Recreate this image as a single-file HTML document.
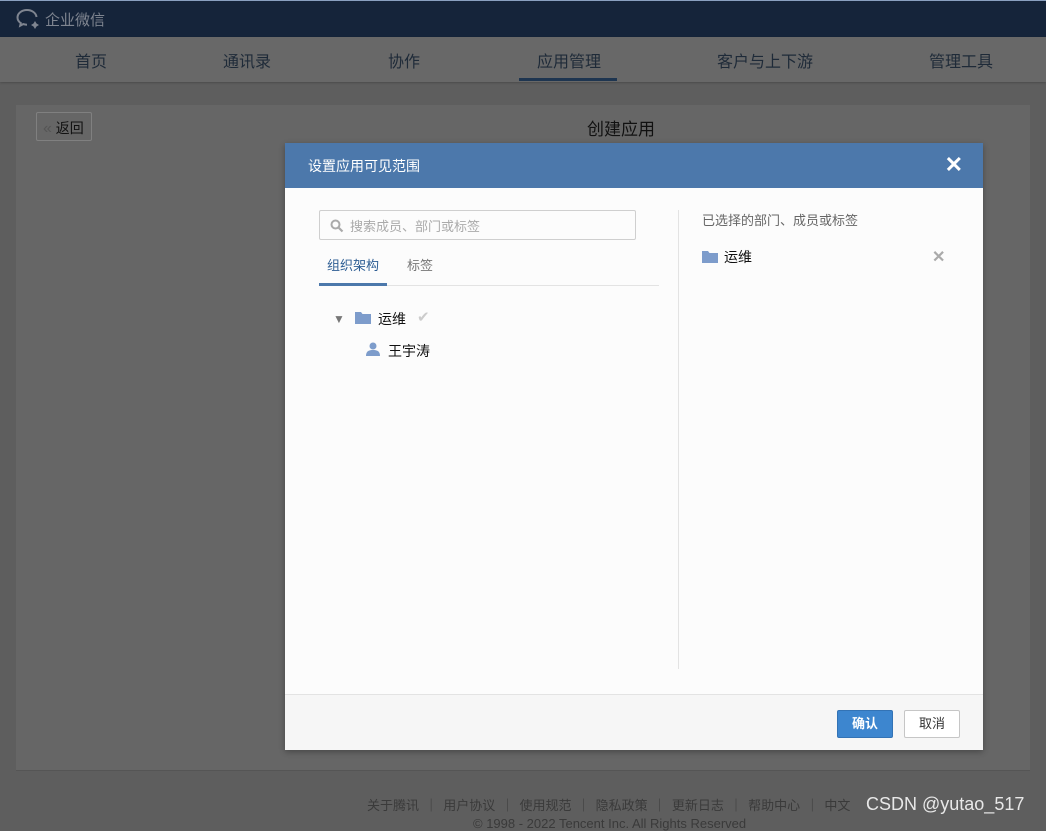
<!DOCTYPE html>
<html><head><meta charset="utf-8"><style>
*{margin:0;padding:0;box-sizing:border-box}
body{width:1046px;height:827px;overflow:hidden;background:#5e5e5e;font-family:"Liberation Sans","Noto Sans CJK SC",sans-serif;position:relative}
.top{position:absolute;left:0;top:0;width:1046px;height:37px;background:#15243a;border-top:1px solid #8aa0c0}
.logo{position:absolute;left:16px;top:7px;color:#7f8590;font-size:15px;display:flex;align-items:center;gap:3px}
.nav{position:absolute;top:37px;left:0;width:1046px;height:45px;background:#686868;box-shadow:0 1px 2px rgba(0,0,0,.2)}
.nav span{position:absolute;top:11px;font-size:16px;color:#1e2a38}
.card{position:absolute;left:16px;top:105px;width:1014px;height:666px;background:#666;border-bottom:1px solid #555}
.back{position:absolute;left:36px;top:112px;width:56px;height:29px;border:1px solid #808080;border-radius:2px;font-size:14px;color:#111;padding:5px 0 0 6px}
.title{position:absolute;left:587px;top:115px;font-size:17px;color:#111}
.foot{position:absolute;top:795px;left:367px;font-size:13px;color:#3a3a3a;white-space:nowrap;word-spacing:2px}
.copy{position:absolute;top:816px;left:473px;font-size:13px;color:#3a3a3a}
.csdn{position:absolute;left:866px;top:794px;font-size:18px;color:#e8e8e8}
.dlg{position:absolute;left:285px;top:143px;width:698px;height:607px;background:#fcfcfc;box-shadow:0 2px 6px rgba(0,0,0,.3)}
.dh{height:45px;background:#4c78ab;color:#fff;font-size:14px;padding:13px 0 0 23px;position:relative}
.dh .x{position:absolute;right:20px;top:9px;font-size:22px;font-weight:bold}
.search{position:absolute;left:34px;top:67px;width:317px;height:30px;border:1px solid #cfcfcf;border-radius:2px;font-size:13px;color:#aaa;padding:5px 0 0 30px}
.tabs{position:absolute;left:34px;top:142px;width:340px;border-bottom:1px solid #e3e3e3;height:1px}
.t1{position:absolute;left:42px;top:112px;font-size:13px;color:#2d5d93}
.t1b{position:absolute;left:34px;top:140px;width:68px;height:3px;background:#4c78ab}
.t2{position:absolute;left:122px;top:112px;font-size:13px;color:#777}
.vline{position:absolute;left:393px;top:67px;width:1px;height:459px;background:#e3e3e3}
.ff{position:absolute;top:551px;left:0;width:698px;height:56px;background:#f6f6f6;border-top:1px solid #e3e3e3}
.ok{position:absolute;left:552px;top:567px;width:56px;height:28px;background:#3d86cf;border:1px solid #3373b5;color:#fff;font-size:13px;font-weight:bold;text-align:center;line-height:26px;border-radius:2px}
.cn{position:absolute;left:619px;top:567px;width:56px;height:28px;background:#fff;border:1px solid #c6c6c6;color:#333;font-size:13px;text-align:center;line-height:26px;border-radius:2px}
.t{position:absolute;font-size:14px;color:#111}
</style></head><body>
<div class="top"><div class="logo"><svg width="26" height="22" viewBox="0 0 26 22"><path d="M11 2C5.5 2 1.5 5.5 1.5 9.5c0 2.3 1.3 4.3 3.3 5.6l-.6 2.6 3-1.6c1.2.4 2.4.6 3.8.6" fill="none" stroke="#7f8590" stroke-width="2"/><path d="M11 2c5 0 9 3 9.5 7" fill="none" stroke="#7f8590" stroke-width="2"/><path d="M19 13l1.5 2.5 2.5 1.5-2.5 1.5-1.5 2.5-1.5-2.5-2.5-1.5 2.5-1.5z" fill="#7f8590"/></svg>企业微信</div></div>
<div class="nav"><span style="left:75px">首页</span><span style="left:223px">通讯录</span><span style="left:388px">协作</span><span style="left:537px">应用管理</span><div style="position:absolute;left:519px;top:41px;width:98px;height:3px;background:#1e3550"></div><span style="left:717px">客户与上下游</span><span style="left:929px">管理工具</span></div>
<div class="card"></div>
<div class="back"><span style="color:#555;font-size:16px">«</span> 返回</div>
<div class="title">创建应用</div>
<div class="foot">关于腾讯 ｜ 用户协议 ｜ 使用规范 ｜ 隐私政策 ｜ 更新日志 ｜ 帮助中心 ｜ 中文</div>
<div class="copy">© 1998 - 2022 Tencent Inc. All Rights Reserved</div>
<div class="csdn">CSDN @yutao_517</div>
<div class="dlg">
<div class="dh">设置应用可见范围<span class="x">✕</span></div>
<div class="search"><svg style="position:absolute;left:10px;top:8px" width="14" height="14" viewBox="0 0 14 14"><circle cx="5.5" cy="5.5" r="4" fill="none" stroke="#aaa" stroke-width="2"/><path d="M8.5 8.5l4 4" stroke="#aaa" stroke-width="2.2"/></svg>搜索成员、部门或标签</div>
<div class="tabs"></div><div class="t1">组织架构</div><div class="t1b"></div><div class="t2">标签</div>
<div style="position:absolute;left:48px;top:169px;font-size:12px;color:#777">▼</div>
<svg style="position:absolute;left:70px;top:169px" width="16" height="12" viewBox="0 0 16 12"><path d="M0 0h6l1.5 2H16v10H0z" fill="#7d9ccb"/></svg>
<div class="t" style="left:93px;top:166px">运维</div>
<div style="position:absolute;left:132px;top:165px;color:#ccc;font-size:15px">✔</div>
<svg style="position:absolute;left:81px;top:199px" width="14" height="14" viewBox="0 0 14 14"><circle cx="7" cy="4" r="3.5" fill="#7d9ccb"/><path d="M0 14c0-5 3-6 7-6s7 1 7 6z" fill="#7d9ccb"/></svg>
<div class="t" style="left:103px;top:198px">王宇涛</div>
<div class="vline"></div>
<div style="position:absolute;left:417px;top:67px;font-size:13px;color:#666">已选择的部门、成员或标签</div>
<svg style="position:absolute;left:417px;top:108px" width="16" height="12" viewBox="0 0 16 12"><path d="M0 0h6l1.5 2H16v10H0z" fill="#7d9ccb"/></svg>
<div class="t" style="left:439px;top:104px">运维</div>
<div style="position:absolute;left:647px;top:104px;color:#aaa;font-size:16px;font-weight:bold">✕</div>
<div class="ff"></div><div class="ok">确认</div><div class="cn">取消</div>
</div>
</body></html>
